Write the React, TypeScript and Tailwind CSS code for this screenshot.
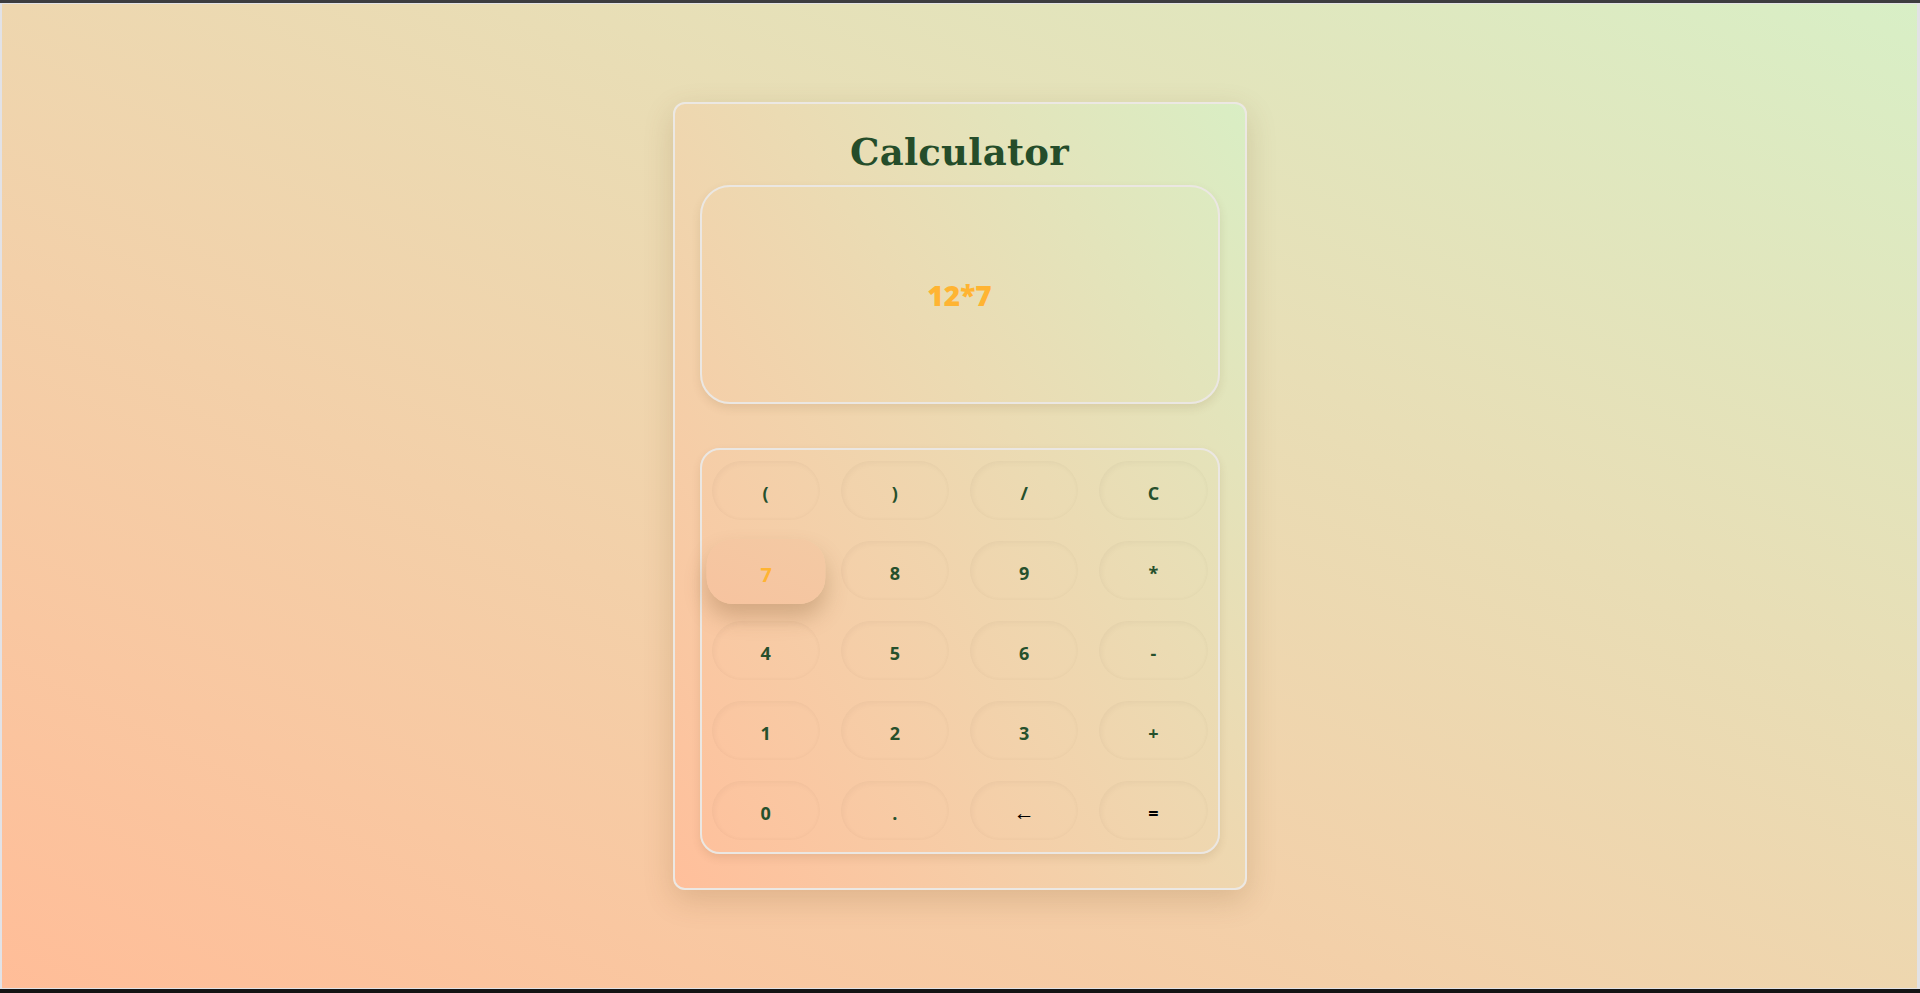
import React, { useState } from 'react';

const keys = ['(', ')', '/', 'C', '7', '8', '9', '*', '4', '5', '6', '-', '1', '2', '3', '+', '0', '.', '←', '='];

const Key: React.FC<{ label: string; hot: boolean; onClick: () => void }> = ({ label, hot, onClick }) => {
  if (hot) {
    return (
      <button
        onClick={onClick}
        className="h-[59px] pt-[5px] rounded-[24px] scale-110 translate-y-[1px] bg-linear-to-tr from-[#f7c39f] to-[#f3caa4] shadow-[0_12px_20px_rgba(120,80,40,0.28)] text-[18px] font-bold text-[#ffb432]"
      >
        {label}
      </button>
    );
  }
  let tone = 'text-[18px] font-bold text-[#26502c]';
  if (label === '=') tone = 'text-[18px] font-bold text-black';
  if (label === '←') tone = 'text-[21px] font-normal text-black';
  return (
    <button
      onClick={onClick}
      className={`h-[59px] pt-[5px] rounded-full shadow-[inset_2px_2px_6px_rgba(0,0,0,0.035),inset_-1px_-1px_4px_rgba(0,0,0,0.02)] ${tone}`}
    >
      {label}
    </button>
  );
};

export default function App() {
  const [expr, setExpr] = useState('12*7');

  const press = (k: string) => {
    if (k === 'C') return setExpr('');
    if (k === '←') return setExpr((e) => e.slice(0, -1));
    if (k === '=') {
      try {
        // eslint-disable-next-line no-new-func
        setExpr(String(Function(`return (${expr})`)()));
      } catch {
        setExpr('Error');
      }
      return;
    }
    setExpr((e) => e + k);
  };

  return (
    <div className="h-screen w-full flex flex-col" style={{ fontFamily: '"Open Sans", "Noto Sans", sans-serif' }}>
      <div className="h-[3px] bg-[#3d3d3f] shrink-0" />
      <div className="flex-1 flex items-center justify-center border-l-2 border-r-[3px] border-t border-b border-[#e2e2e6] bg-linear-to-tr from-[#ffbd98] to-[#d8efc6]">
        <div className="w-[574px] flex flex-col px-[25px] pt-[26px] pb-[34px] rounded-xl border-2 border-[#ece8e3] bg-linear-to-tr from-[#ffbf9b] to-[#d9eec4] shadow-[0_10px_30px_rgba(110,70,30,0.18)]">
          <h1
            className="h-[44px] leading-[44px] text-center text-[37px] font-bold tracking-[0.3px] text-[#254d2a] mb-[11px]"
            style={{ fontFamily: '"DejaVu Serif", "Liberation Serif", serif' }}
          >
            Calculator
          </h1>
          <div className="h-[219px] rounded-[30px] border-2 border-[#ebe7e2] shadow-[0_4px_10px_rgba(110,70,30,0.12)] flex items-center justify-center">
            <span className="text-[28px] font-extrabold text-[#ffb432]">{expr}</span>
          </div>
          <div className="mt-[44px] rounded-[20px] border-2 border-[#ebe7e2] shadow-[0_4px_8px_rgba(110,70,30,0.12)] px-[10px] pt-[11px] pb-[12px] grid grid-cols-4 gap-x-[21px] gap-y-[21px]">
            {keys.map((k) => (
              <Key key={k} label={k} hot={k === '7'} onClick={() => press(k)} />
            ))}
          </div>
        </div>
      </div>
      <div className="h-[4px] bg-[#141414] shrink-0" />
    </div>
  );
}
